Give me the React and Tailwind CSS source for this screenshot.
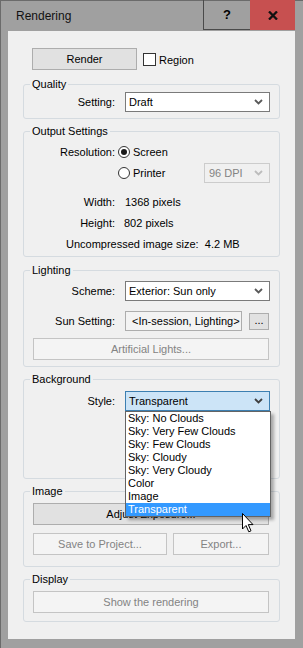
import React from "react";

const items = [
  "Sky: No Clouds",
  "Sky: Very Few Clouds",
  "Sky: Few Clouds",
  "Sky: Cloudy",
  "Sky: Very Cloudy",
  "Color",
  "Image",
  "Transparent",
];

function Chevron({ color = "#5a5a5a" }) {
  return (
    <svg width="9" height="6" viewBox="0 0 9 6" className="shrink-0">
      <path d="M1 1 L4.5 4.5 L8 1" fill="none" stroke={color} strokeWidth="1.8" />
    </svg>
  );
}

function Group({ label, className = "", children }) {
  return (
    <fieldset className={`mx-[15px] border border-[#d5dbe0] rounded-[3px] ${className}`}>
      <legend className="ml-[6px] px-[2px] leading-[14px]">{label}</legend>
      {children}
    </fieldset>
  );
}

function Label({ children }) {
  return <div className="w-[91px] shrink-0 text-right">{children}</div>;
}

function Select({ value, className = "" }) {
  return (
    <div className={`ml-[10px] w-[145px] h-[20px] border border-[#7a7a7a] bg-white flex items-center pl-[3px] pr-[6px] ${className}`}>
      <span className="flex-1 whitespace-nowrap">{value}</span>
      <Chevron />
    </div>
  );
}

function Radio({ checked }) {
  return (
    <div className="w-[12px] h-[12px] rounded-full border border-[#333333] bg-white flex items-center justify-center shrink-0">
      {checked && <div className="w-[6px] h-[6px] rounded-full bg-[#1a1a1a]" />}
    </div>
  );
}

function Button({ children, disabled, className = "" }) {
  return (
    <div
      className={`h-[22px] border flex items-center justify-center ${
        disabled ? "border-[#c4c4c4] bg-[#f4f4f4] text-[#838383]" : "border-[#adadad] bg-[#e1e1e1] text-black"
      } ${className}`}
    >
      {children}
    </div>
  );
}

export default function App() {
  return (
    <div className="relative w-[303px] h-[648px] bg-[#a0a0a0] shadow-[inset_1px_1px_0_#6b6b6b] font-['Liberation_Sans',Arial,sans-serif] text-[11px] text-black flex flex-col">
      {/* title bar */}
      <div className="h-[31px] flex shrink-0">
        <div className="w-[203px] pl-[16px] flex items-center text-[12px] text-[#111]">Rendering</div>
        <div className="w-[47px] h-[30px] border-l border-b border-[#4a4a4a] flex items-center justify-center font-bold text-[13px]">?</div>
        <div className="w-[45px] h-[30px] bg-[#c75050] flex items-center justify-center">
          <svg width="10" height="9" viewBox="0 0 10 9">
            <path d="M1 0.5 L9 8.5 M9 0.5 L1 8.5" stroke="#111" strokeWidth="2.3" />
          </svg>
        </div>
      </div>

      {/* content */}
      <div className="mx-[8px] w-[287px] h-[608px] bg-[#f0f0f0] pt-[17px] flex flex-col">
        <div className="flex items-center h-[22px]">
          <Button className="ml-[24px] w-[105px]">Render</Button>
          <div className="ml-[6px] mt-[1px] w-[13px] h-[13px] border border-[#333333] bg-white" />
          <span className="ml-[3px] mt-[2px]">Region</span>
        </div>

        <Group label="Quality" className="mt-[7px]">
          <div className="pt-[1px] pb-[6px] flex items-center">
            <Label>Setting:</Label>
            <Select value="Draft" />
          </div>
        </Group>

        <Group label="Output Settings" className="mt-[5px]">
          <div className="pt-[4px] pb-[2px] flex flex-col">
            <div className="h-[20px] flex items-center">
              <Label>Resolution:</Label>
              <div className="ml-[3px]"><Radio checked /></div>
              <span className="ml-[3px]">Screen</span>
            </div>
            <div className="mt-[1px] h-[20px] flex items-center">
              <div className="ml-[94px]"><Radio /></div>
              <span className="ml-[3px]">Printer</span>
              <div className="ml-auto mr-[9px] w-[66px] h-[20px] border border-[#cccccc] bg-[#f0f0f0] flex items-center pl-[4px] pr-[6px] text-[#838383]">
                <span className="flex-1">96 DPI</span>
                <Chevron color="#bcbcbc" />
              </div>
            </div>
            <div className="mt-[9px] h-[20px] flex items-center">
              <Label>Width:</Label>
              <span className="ml-[10px]">1368 pixels</span>
            </div>
            <div className="mt-[1px] h-[20px] flex items-center">
              <Label>Height:</Label>
              <span className="ml-[9px]">802 pixels</span>
            </div>
            <div className="mt-[1px] h-[20px] flex items-center pl-[42px]">
              Uncompressed image size:&nbsp; 4.2 MB
            </div>
          </div>
        </Group>

        <Group label="Lighting" className="mt-[6px]">
          <div className="pt-[4px] pb-[6px] flex flex-col">
            <div className="h-[20px] flex items-center">
              <Label>Scheme:</Label>
              <Select value="Exterior: Sun only" />
            </div>
            <div className="mt-[10px] h-[20px] flex items-center">
              <Label>Sun Setting:</Label>
              <div className="ml-[10px] w-[117px] h-[20px] border border-[#adadad] bg-[#f3f3f3] flex items-center pl-[6px] whitespace-nowrap overflow-hidden">
                &lt;In-session, Lighting&gt;
              </div>
              <div className="ml-[7px] w-[20px] h-[17px] border border-[#adadad] bg-[#e1e1e1] flex items-center justify-center leading-none pb-[2px]">
                ...
              </div>
            </div>
            <Button disabled className="mt-[7px] ml-[9px] w-[236px]">Artificial Lights...</Button>
          </div>
        </Group>

        <Group label="Background" className="mt-[5px]">
          <div className="pt-[5px] pb-[67px] flex items-center">
            <Label>Style:</Label>
            <div className="relative ml-[10px]">
              <div className="w-[145px] h-[20px] border border-[#3c7fb1] bg-[#cce4f7] flex items-center pl-[3px] pr-[6px]">
                <span className="flex-1">Transparent</span>
                <Chevron color="#404040" />
              </div>
              <div className="absolute left-0 top-[20px] z-10 w-[146px] border border-[#646464] bg-white shadow-[3px_3px_3px_rgba(0,0,0,0.3)]">
                {items.map((it) => (
                  <div
                    key={it}
                    className={`h-[13px] leading-[13px] pl-[2px] whitespace-nowrap ${
                      it === "Transparent" ? "bg-[#3399ff] text-white" : ""
                    }`}
                  >
                    {it}
                  </div>
                ))}
              </div>
            </div>
          </div>
        </Group>

        <Group label="Image" className="mt-[5px]">
          <div className="pt-[5px] pb-[11px] flex flex-col">
            <Button className="ml-[9px] w-[236px]">Adjust Exposure...</Button>
            <div className="mt-[8px] ml-[9px] flex gap-[6px]">
              <Button disabled className="w-[134px]">Save to Project...</Button>
              <Button disabled className="w-[96px]">Export...</Button>
            </div>
          </div>
        </Group>

        <Group label="Display" className="mt-[5px]">
          <div className="pt-[5px] pb-[8px]">
            <Button disabled className="ml-[9px] w-[236px]">Show the rendering</Button>
          </div>
        </Group>
      </div>

      {/* mouse cursor */}
      <svg className="absolute left-[242px] top-[513px] z-20" width="13" height="20" viewBox="0 0 13 20">
        <path d="M0.5 0.5 L0.5 16 L4 12.5 L6.8 18.8 L9 17.8 L6.3 11.6 L11 11.6 Z" fill="#fff" stroke="#000" strokeWidth="1" />
      </svg>
    </div>
  );
}
